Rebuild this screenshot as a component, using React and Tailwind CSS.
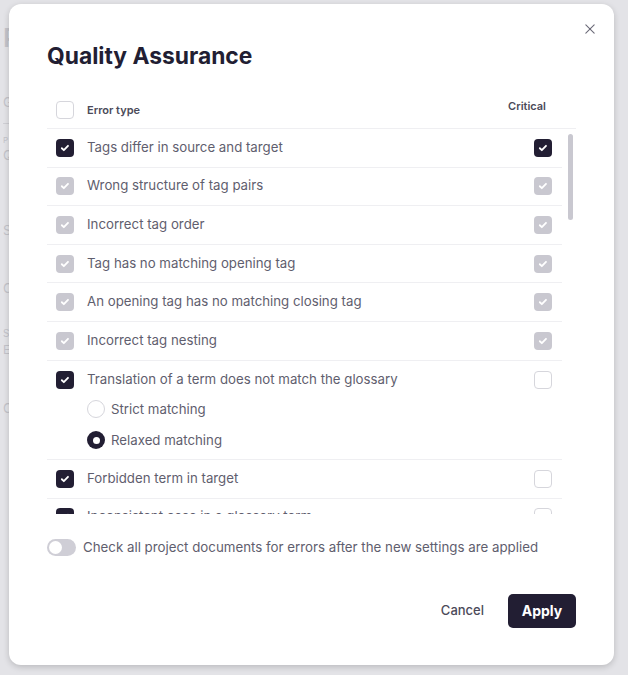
import React, { useState } from 'react'

const CheckMark = () => (
  <svg viewBox="0 0 12 12" className="w-[10px] h-[10px]" fill="none">
    <path d="M2.2 6.3l2.4 2.3 5-5.2" stroke="white" strokeWidth="2.2" strokeLinecap="round" strokeLinejoin="round" />
  </svg>
)

const Box = ({ state }) => {
  if (state === 'on') {
    return (
      <span className="w-[18px] h-[18px] rounded-[4px] bg-[#221e33] flex items-center justify-center shrink-0">
        <CheckMark />
      </span>
    )
  }
  if (state === 'locked') {
    return (
      <span className="w-[18px] h-[18px] rounded-[4px] bg-[#c9c8d0] flex items-center justify-center shrink-0">
        <CheckMark />
      </span>
    )
  }
  return <span className="w-[18px] h-[18px] rounded-[4px] border border-[#d6d6dc] bg-white shrink-0" />
}

const rows = [
  { label: 'Tags differ in source and target', on: 'on', critical: 'on' },
  { label: 'Wrong structure of tag pairs', on: 'locked', critical: 'locked' },
  { label: 'Incorrect tag order', on: 'locked', critical: 'locked' },
  { label: 'Tag has no matching opening tag', on: 'locked', critical: 'locked' },
  { label: 'An opening tag has no matching closing tag', on: 'locked', critical: 'locked' },
  { label: 'Incorrect tag nesting', on: 'locked', critical: 'locked' },
]

const Row = ({ label, on, critical }) => (
  <div className="h-[38.6px] flex items-center pl-[9px] pr-[10px] border-b border-[#efeff2]">
    <Box state={on} />
    <span className="ml-[13px] flex-1 text-[13.25px] text-[#5f5e6e]">{label}</span>
    <Box state={critical} />
  </div>
)

const Radio = ({ checked, label }) => (
  <div className="flex items-center h-[31px]">
    {checked ? (
      <span className="w-[18px] h-[18px] rounded-full bg-[#221e33] flex items-center justify-center">
        <span className="w-[7px] h-[7px] rounded-full bg-white" />
      </span>
    ) : (
      <span className="w-[18px] h-[18px] rounded-full border border-[#d6d6dc] bg-white" />
    )}
    <span className="ml-[6px] text-[13.25px] text-[#5f5e6e]">{label}</span>
  </div>
)

export default function App() {
  const [recheck, setRecheck] = useState(false)

  return (
    <div className="relative w-[628px] h-[675px] overflow-hidden bg-[#e3e3e7] font-['Inter',sans-serif]">
      {/* page behind the overlay */}
      <div className="pt-[18px] pl-[3px] text-[#c4c4ca] select-none">
        <div className="text-[26px] font-semibold">P</div>
        <div className="mt-[36px] text-[13px]">G</div>
        <div className="mt-[10px] w-[30px] border-b border-[#cfcfd4]" />
        <div className="mt-[10px] text-[8px]">P</div>
        <div className="text-[13px]">Q</div>
        <div className="mt-[56px] text-[13px]">S</div>
        <div className="mt-[38px] text-[13px]">C</div>
        <div className="mt-[28px] text-[10px]">S</div>
        <div className="text-[12px]">E</div>
        <div className="mt-[40px] text-[13px]">C</div>
      </div>

      {/* dialog */}
      <div className="absolute left-[9px] top-[4px] w-[605px] h-[661px] bg-white rounded-[12px] shadow-[0_2px_6px_rgba(0,0,0,0.18)] flex flex-col pl-[38px] pr-[38px]">
        <button className="absolute right-[16px] top-[17px] w-[16px] h-[16px] flex items-center justify-center text-[#6b6a78]">
          <svg viewBox="0 0 12 12" className="w-[10px] h-[10px]" fill="none">
            <path d="M1 1l10 10M11 1L1 11" stroke="currentColor" strokeWidth="1.3" strokeLinecap="round" />
          </svg>
        </button>

        <h1 className="mt-[38px] text-[22.8px] leading-[28px] font-bold text-[#221e33]">
          Quality Assurance
        </h1>

        <div className="mt-[22px] h-[37px] flex items-center pl-[9px] pr-[30px] border-b border-[#efeff2]">
          <Box state="off" />
          <span className="ml-[13px] flex-1 text-[11px] font-semibold text-[#4b4a59]">Error type</span>
          <span className="text-[11px] font-semibold text-[#4b4a59] -mt-[8px]">Critical</span>
        </div>

        <div className="relative h-[385px] overflow-hidden">
          <div className="pr-[14px]">
            {rows.map((r) => (
              <Row key={r.label} {...r} />
            ))}
            <div className="pl-[9px] pr-[10px] pt-[9.5px] pb-[3px] border-b border-[#efeff2]">
              <div className="flex items-center">
                <Box state="on" />
                <span className="ml-[13px] flex-1 text-[13.25px] text-[#5f5e6e]">
                  Translation of a term does not match the glossary
                </span>
                <Box state="off" />
              </div>
              <div className="pl-[31px] pt-[4px]">
                <Radio label="Strict matching" />
                <Radio checked label="Relaxed matching" />
              </div>
            </div>
            <Row label="Forbidden term in target" on="on" critical="off" />
            <Row label="Inconsistent case in a glossary term" on="on" critical="off" />
          </div>
          <div className="absolute right-[3px] top-[5px] w-[5px] h-[86px] rounded-full bg-[#c9c8d0]" />
        </div>

        <div className="mt-[24px] flex items-center">
          <button
            onClick={() => setRecheck(!recheck)}
            className="w-[29px] h-[17px] rounded-full bg-[#cfced6] p-[2px] flex items-center"
          >
            <span className={recheck ? 'ml-auto w-[13px] h-[13px] rounded-full bg-white' : 'w-[13px] h-[13px] rounded-full bg-white'} />
          </button>
          <span className="ml-[7px] text-[13.3px] text-[#5f5e6e]">
            Check all project documents for errors after the new settings are applied
          </span>
        </div>

        <div className="mt-[36px] flex justify-end items-center">
          <button className="text-[13px] font-medium text-[#4b4a59] mr-[24px]">Cancel</button>
          <button className="w-[68px] h-[34px] rounded-[5px] bg-[#221e33] text-white text-[14px] font-bold">
            Apply
          </button>
        </div>
      </div>
    </div>
  )
}
